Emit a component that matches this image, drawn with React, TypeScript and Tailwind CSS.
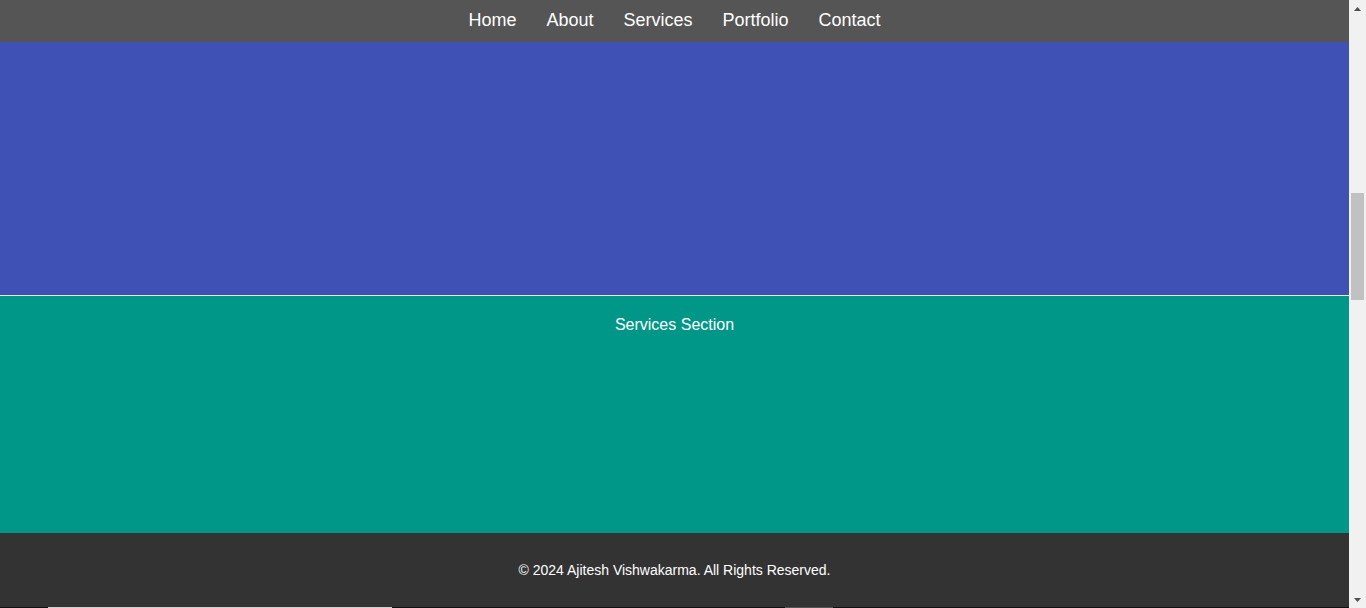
export default function App() {
  const links = ['Home', 'About', 'Services', 'Portfolio', 'Contact']

  return (
    <div className="flex h-[608px] w-full overflow-hidden font-['Liberation_Sans',Arial,sans-serif]">
      {/* Page */}
      <div className="flex flex-1 flex-col">
        <nav className="flex h-[42px] shrink-0 items-center justify-center bg-[#555555] pb-[2px]">
          {links.map((l) => (
            <a key={l} href="#" className="px-[15px] text-[18px] leading-[21px] text-white">
              {l}
            </a>
          ))}
        </nav>

        {/* About / hero block */}
        <section className="h-[253px] shrink-0 bg-[#3f51b5]" />
        <div className="h-px shrink-0 bg-[#e8e8f0]" />

        <section className="h-[237px] shrink-0 bg-[#009688] pt-[20px] text-center">
          <p className="text-[16px] leading-[18px] text-white">Services Section</p>
        </section>

        <footer className="flex-1 bg-[#333333] pt-[29px] text-center">
          <p className="text-[14px] leading-[16px] text-white">
            © 2024 Ajitesh Vishwakarma. All Rights Reserved.
          </p>
        </footer>

        {/* bottom edge strip */}
        <div className="flex h-px shrink-0 bg-[#111111]">
          <div className="w-[48px]" />
          <div className="w-[344px] bg-[#cfcfcf]" />
          <div className="w-[393px]" />
          <div className="w-[48px] bg-[#555555]" />
        </div>
      </div>

      {/* Scrollbar */}
      <div className="flex w-[17px] shrink-0 flex-col items-center bg-[#f1f1f1]">
        <div className="flex h-[17px] w-full items-center justify-center">
          <svg width="7" height="4" viewBox="0 0 7 4">
            <path d="M3.5 0L7 4H0z" fill="#505050" />
          </svg>
        </div>
        <div className="mt-[176px] h-[107px] w-[13px] bg-[#c1c1c1]" />
        <div className="flex-1" />
        <div className="flex h-[17px] w-full items-center justify-center">
          <svg width="7" height="4" viewBox="0 0 7 4">
            <path d="M0 0H7L3.5 4z" fill="#505050" />
          </svg>
        </div>
      </div>
    </div>
  )
}
